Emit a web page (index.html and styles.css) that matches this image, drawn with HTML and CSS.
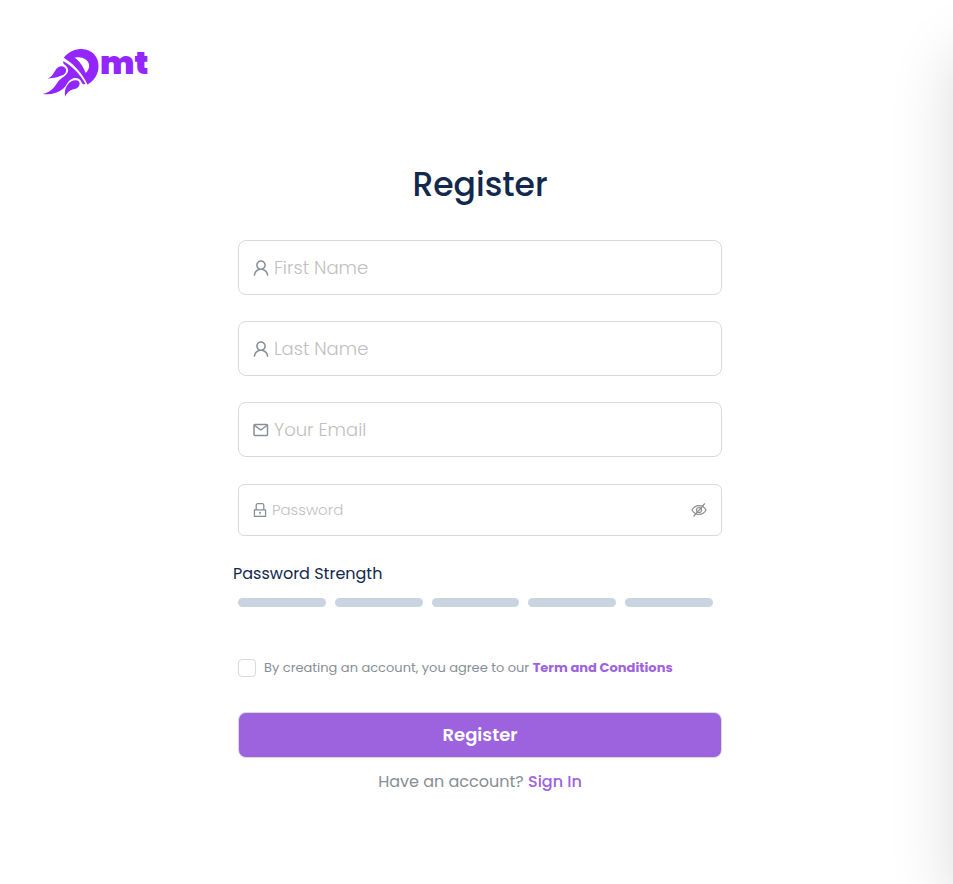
FILE: index.html
```html
<!DOCTYPE html>
<html lang="en">
<head>
<meta charset="utf-8">
<meta name="viewport" content="width=device-width, initial-scale=1">
<title>Register</title>
<link rel="stylesheet" href="styles.css">
</head>
<body>
<div class="page">
  <header class="header">
    <a class="logo" href="#" aria-label="Dmt">
      <svg class="logo-mark" viewBox="20 24 168 148" aria-hidden="true">
        <path fill="currentColor" fill-rule="evenodd" d="M84 53C99 34 118 27 138 27C167 28 187 49 187 77C187 101 174 121 154 132C145 111 123 77 84 53ZM116 53C131 62 141 79 149 98C163 86 162 68 150 59C141 52 128 50 116 53Z"/>
        <path fill="currentColor" d="M84 64C107 77 131 99 148 130C140 134 139 129 136 124C133 115 122 110 111 114C94 121 94 134 83 144C67 158 43 164 22 160C50 153 58 137 69 121C78 112 94 105 97 92C98 84 92 78 86 73C81 68 81 63 84 64Z"/>
        <path fill="currentColor" d="M36 114C50 110 53 99 60 89C67 78 79 75 87 82C95 90 90 101 80 105C66 110 58 114 36 114Z"/>
        <path fill="currentColor" d="M88 168C86 156 87 144 96 132C103 120 120 115 129 123C135 132 127 143 117 145C104 147 94 154 88 168Z"/>
      </svg>
      <span class="logo-text">mt</span>
    </a>
  </header>

  <main class="main">
    <h1 class="title">Register</h1>
    <form class="form">
      <label class="field">
        <svg class="icon icon-user" viewBox="0 0 1024 1024" aria-hidden="true"><path d="M858.5 763.6a374 374 0 00-80.6-119.5 375.63 375.63 0 00-119.5-80.6c-.4-.2-.8-.3-1.2-.5C719.5 518 760 444.7 760 362c0-137-111-248-248-248S264 225 264 362c0 82.7 40.5 156 102.8 201.1-.4.2-.8.3-1.2.5-44.8 18.9-85 46-119.5 80.6a375.63 375.63 0 00-80.6 119.5A371.7 371.7 0 00136 901.8a8 8 0 008 8.2h60c4.4 0 7.9-3.5 8-7.8 2-77.2 33-149.5 87.8-204.3 56.7-56.7 132-87.9 212.2-87.9s155.5 31.2 212.2 87.9C779 752.7 810 825 812 902.2c.1 4.4 3.6 7.8 8 7.8h60a8 8 0 008-8.2c-1-47.8-10.9-94.3-29.5-138.2zM512 534c-45.9 0-89.1-17.9-121.6-50.4S340 407.9 340 362c0-45.9 17.9-89.1 50.4-121.6S466.1 190 512 190s89.1 17.9 121.6 50.4S684 316.1 684 362c0 45.9-17.9 89.1-50.4 121.6S557.9 534 512 534z"/></svg>
        <input class="input" type="text" placeholder="First Name" aria-label="First Name">
      </label>
      <label class="field">
        <svg class="icon icon-user" viewBox="0 0 1024 1024" aria-hidden="true"><path d="M858.5 763.6a374 374 0 00-80.6-119.5 375.63 375.63 0 00-119.5-80.6c-.4-.2-.8-.3-1.2-.5C719.5 518 760 444.7 760 362c0-137-111-248-248-248S264 225 264 362c0 82.7 40.5 156 102.8 201.1-.4.2-.8.3-1.2.5-44.8 18.9-85 46-119.5 80.6a375.63 375.63 0 00-80.6 119.5A371.7 371.7 0 00136 901.8a8 8 0 008 8.2h60c4.4 0 7.9-3.5 8-7.8 2-77.2 33-149.5 87.8-204.3 56.7-56.7 132-87.9 212.2-87.9s155.5 31.2 212.2 87.9C779 752.7 810 825 812 902.2c.1 4.4 3.6 7.8 8 7.8h60a8 8 0 008-8.2c-1-47.8-10.9-94.3-29.5-138.2zM512 534c-45.9 0-89.1-17.9-121.6-50.4S340 407.9 340 362c0-45.9 17.9-89.1 50.4-121.6S466.1 190 512 190s89.1 17.9 121.6 50.4S684 316.1 684 362c0 45.9-17.9 89.1-50.4 121.6S557.9 534 512 534z"/></svg>
        <input class="input" type="text" placeholder="Last Name" aria-label="Last Name">
      </label>
      <label class="field">
        <svg class="icon-mail" viewBox="0 0 18 18" fill="none" stroke="currentColor" stroke-width="1.500" stroke-linejoin="round" aria-hidden="true"><rect x="2" y="3.500" width="13.500" height="11" rx="1"/><path d="M2 4L8.800 9L15.500 4"/></svg>
        <input class="input" type="email" placeholder="Your Email" aria-label="Your Email">
      </label>
      <div class="field field-password">
        <svg class="icon icon-lock" viewBox="0 0 1024 1024" aria-hidden="true"><path d="M832 464h-68V240c0-70.7-57.3-128-128-128H388c-70.7 0-128 57.3-128 128v224h-68c-17.7 0-32 14.3-32 32v384c0 17.7 14.3 32 32 32h640c17.7 0 32-14.3 32-32V496c0-17.7-14.3-32-32-32zM332 240c0-30.9 25.1-56 56-56h248c30.9 0 56 25.1 56 56v224H332V240zm460 600H232V536h560v304zM484 701v53c0 4.4 3.6 8 8 8h40c4.4 0 8-3.6 8-8v-53a48.1 48.1 0 10-56 0z"/></svg>
        <input class="input" type="password" placeholder="Password" aria-label="Password">
        <button class="reveal" type="button" aria-label="Show password">
          <svg class="icon-eye" viewBox="0 0 16 16" fill="none" stroke="currentColor" stroke-width="1.200" aria-hidden="true"><path d="M1 8C4 2.200 12 2.200 15 8C12 13.800 4 13.800 1 8ZM2.500 14.500L13.800 1.500"/><circle cx="8" cy="8" r="2.500"/></svg>
        </button>
      </div>

      <section class="strength">
        <h2 class="strength-title">Password Strength</h2>
        <div class="strength-bars">
          <span class="bar"></span><span class="bar"></span><span class="bar"></span><span class="bar"></span><span class="bar"></span>
        </div>
      </section>

      <div class="terms">
        <input class="checkbox" type="checkbox" id="agree">
        <label for="agree">By creating an account, you agree to our <a class="link" href="#">Term and Conditions</a></label>
      </div>

      <button class="submit" type="submit">Register</button>
    </form>
    <p class="signin">Have an account? <a class="link" href="#">Sign In</a></p>
  </main>
  <div class="side-shadow"></div>
</div>
</body>
</html>
```
FILE: styles.css
```css
* { box-sizing: border-box; }

body {
  margin: 0;
  background: #fff;
  color: #12284c;
  font-family: Poppins, Inter, "Open Sans", sans-serif;
}

.page {
  position: relative;
  min-height: 100vh;
  overflow: hidden;
}

.header { padding: 48px 42px 0; }

.logo {
  display: inline-flex;
  align-items: flex-start;
  gap: 1px;
  color: #9326ff;
  text-decoration: none;
}

.logo-mark { width: 57px; height: 50px; }

.logo-text {
  font-size: 32px;
  font-weight: 900;
  line-height: 30px;
}

.main {
  width: 100%;
  max-width: 491px;
  margin: 0 auto;
  padding: 60px 0 40px 7px;
}

.title {
  margin: 0 0 35px;
  font-size: 33px;
  font-weight: 500;
  line-height: 40px;
  text-align: center;
}

.form {
  display: flex;
  flex-direction: column;
}

.field {
  display: flex;
  align-items: center;
  height: 55px;
  margin-bottom: 26px;
  padding: 0 12px;
  border: 1px solid #d9d9d9;
  border-radius: 8px;
  color: #868e96;
}

.field-password {
  height: 52px;
  margin-top: 1px;
  border-radius: 6px;
}

.icon {
  flex: none;
  fill: currentColor;
}

.icon-user { width: 20px; height: 20px; }
.icon-mail { flex: none; width: 18px; height: 18px; margin: 0 1px; }
.icon-lock { width: 18px; height: 18px; }

.input {
  flex: 1;
  min-width: 0;
  padding: 0;
  margin-left: 3px;
  border: 0;
  outline: 0;
  background: none;
  color: #12284c;
  font: 300 18px/24px Poppins, Inter, sans-serif;
}

.field-password .input { font-size: 15px; }

.input::placeholder {
  color: #bfbfbf;
  opacity: 1;
}

.reveal {
  display: flex;
  padding: 0;
  margin-right: 2px;
  border: 0;
  background: none;
  color: #8c8c8c;
  cursor: pointer;
}

.icon-eye { width: 16px; height: 16px; }

.strength-title {
  margin: 0 0 12px -5px;
  font-size: 16px;
  font-weight: 400;
  line-height: 24px;
}

.strength-bars {
  display: flex;
  gap: 9px;
  padding-right: 9px;
}

.bar {
  flex: 1;
  height: 9px;
  border-radius: 5px;
  background: #cad4e0;
}

.terms {
  display: flex;
  align-items: center;
  gap: 8px;
  margin: 51px 0 34px;
  color: #868e96;
  font-size: 13px;
  line-height: 20px;
}

.checkbox {
  flex: none;
  width: 18px;
  height: 18px;
  margin: 0;
  appearance: none;
  border: 1px solid #d9d9d9;
  border-radius: 4px;
  background: #fff;
}

.checkbox:checked { background: #9d62de; }

.link {
  color: #9d62de;
  font-weight: 700;
  text-decoration: none;
}

.submit {
  height: 46px;
  border: 1px solid #d9d9d9;
  border-radius: 8px;
  background: #9d62de;
  color: #fff;
  font: 600 18px/24px Poppins, Inter, sans-serif;
  cursor: pointer;
}

.signin {
  margin: 12px 0 0;
  color: #868e96;
  font-size: 16px;
  font-weight: 400;
  line-height: 24px;
  text-align: center;
}

.signin .link { font-weight: 500; }

/* Soft edge cast by the panel beyond the right side */
.side-shadow {
  position: absolute;
  top: 54px;
  bottom: -20px;
  left: 100%;
  width: 200px;
  box-shadow: 0 0 60px rgba(0, 0, 0, 0.14);
}
```
